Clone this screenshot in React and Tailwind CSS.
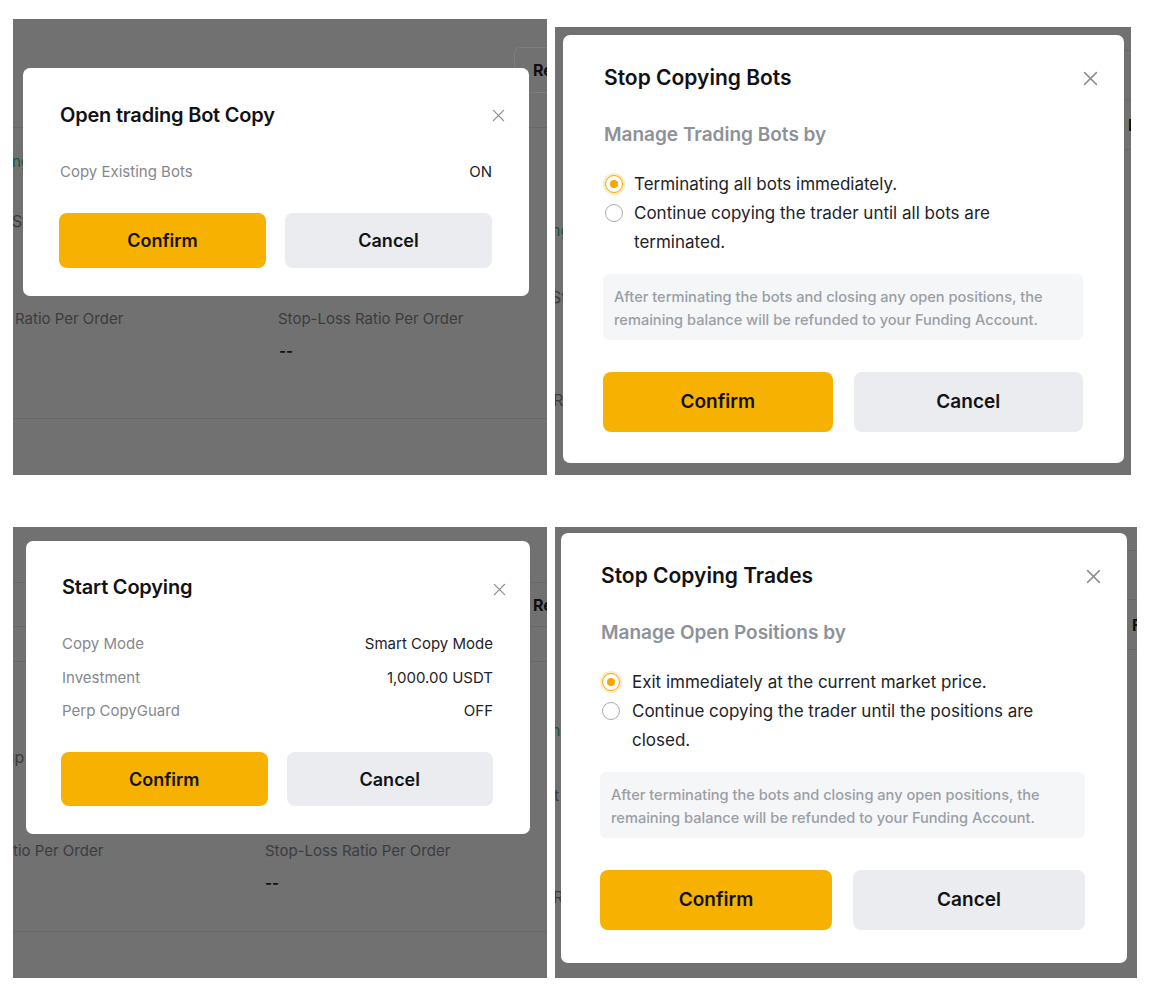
import React from "react";

function XIcon({ size = 13, className = "" }) {
  return (
    <svg width={size} height={size} viewBox="0 0 14 14" className={className} fill="none">
      <path d="M1.5 1.5L12.5 12.5M12.5 1.5L1.5 12.5" stroke="#8b8e94" strokeWidth="1.4" strokeLinecap="round" />
    </svg>
  );
}

function Radio({ checked }) {
  if (checked) {
    return (
      <span className="mt-[5px] ml-[2px] w-[18px] h-[18px] shrink-0 rounded-full border-[1.5px] border-[#F7A600] shadow-[0_0_0_2px_#FDEBC4] flex items-center justify-center">
        <span className="w-[8px] h-[8px] rounded-full bg-[#F7A600]" />
      </span>
    );
  }
  return <span className="mt-[5px] ml-[2px] w-[18px] h-[18px] shrink-0 rounded-full border-[1.5px] border-[#a8abb1] bg-white" />;
}

function Buttons({ h, gap, text }) {
  return (
    <div className={`flex ${gap}`}>
      <button className={`flex-1 ${h} rounded-[8px] bg-[#F7B100] ${text} font-semibold text-[#121214]`}>Confirm</button>
      <button className={`flex-1 ${h} rounded-[8px] bg-[#EAECEF] ${text} font-semibold text-[#121214]`}>Cancel</button>
    </div>
  );
}

function ReBox() {
  return (
    <div className="flex justify-end h-[46px]">
      <div className="w-[33px] border border-r-0 border-[#7d7d7d] rounded-l-[6px] flex items-center pl-[18px] font-bold text-[#0f0f0f] text-[16px] overflow-hidden whitespace-nowrap">
        Re
      </div>
    </div>
  );
}

function TopLeft() {
  return (
    <div className="relative w-[534px] h-[456px] bg-[#717171] overflow-hidden shrink-0">
      <div className="flex flex-col text-[15px] text-[#3b3c3f] whitespace-nowrap">
        <div className="h-[28px]" />
        <ReBox />
        <div className="h-[35px] border-b border-[#686868]" />
        <div className="h-[24px]" />
        <div className="h-[20px] leading-[20px] text-[#17563a] -ml-[1px]">ng</div>
        <div className="h-[39px]" />
        <div className="h-[20px] leading-[20px] -ml-[1px] text-[16px]">St</div>
        <div className="h-[78px]" />
        <div className="flex h-[20px] leading-[20px] text-[15px]">
          <div className="w-[265px] pl-[2px]">Ratio Per Order</div>
          <div>Stop-Loss Ratio Per Order</div>
        </div>
        <div className="h-[12px]" />
        <div className="h-[20px] leading-[20px] pl-[266px] font-bold text-[#151515]">--</div>
        <div className="h-[58px] border-b border-[#686868]" />
      </div>
      <div className="absolute left-[10px] top-[49px] w-[506px] h-[228px] bg-white rounded-[7px] pl-[36px] pr-[37px] pt-[33px] flex flex-col">
        <div className="flex items-center justify-between h-[28px]">
          <div className="text-[20px] font-semibold text-[#121214] pl-[1px] tracking-[-0.2px]">Open trading Bot Copy</div>
          <XIcon className="-mr-[13px]" />
        </div>
        <div className="mt-[33px] flex justify-between h-[20px] leading-[20px] text-[15px] pl-[1px]">
          <span className="text-[#85888e]">Copy Existing Bots</span>
          <span className="text-[#1e2329]">ON</span>
        </div>
        <div className="mt-[31px]">
          <Buttons h="h-[55px]" gap="gap-[19px]" text="text-[18px]" />
        </div>
      </div>
    </div>
  );
}

function BottomLeft() {
  const rows = [
    ["Copy Mode", "Smart Copy Mode"],
    ["Investment", "1,000.00 USDT"],
    ["Perp CopyGuard", "OFF"],
  ];
  return (
    <div className="relative w-[534px] h-[451px] bg-[#717171] overflow-hidden shrink-0">
      <div className="flex flex-col text-[15px] text-[#3b3c3f] whitespace-nowrap">
        <div className="h-[56px] border-b border-[#686868]" />
        <div className="flex justify-end h-[44px] border-b border-[#686868]">
          <div className="w-[17px] flex items-center pl-[3px] font-bold text-[#0f0f0f] text-[16px] overflow-hidden">Re</div>
        </div>
        <div className="h-[35px] border-b border-[#686868]" />
        <div className="h-[85px]" />
        <div className="h-[20px] leading-[20px] -ml-[8px] text-[16px]">up</div>
        <div className="h-[74px]" />
        <div className="flex h-[20px] leading-[20px] text-[15px]">
          <div className="w-[252px]">tio Per Order</div>
          <div>Stop-Loss Ratio Per Order</div>
        </div>
        <div className="h-[12px]" />
        <div className="h-[20px] leading-[20px] pl-[252px] font-bold text-[#151515]">--</div>
        <div className="h-[39px] border-b border-[#686868]" />
      </div>
      <div className="absolute left-[13px] top-[14px] w-[504px] h-[293px] bg-white rounded-[7px] pl-[35px] pr-[37px] pt-[32px] flex flex-col">
        <div className="flex items-center justify-between h-[28px]">
          <div className="text-[20px] font-semibold text-[#121214] pl-[1px] tracking-[-0.2px]">Start Copying</div>
          <XIcon className="-mr-[13px] mt-[4px]" />
        </div>
        <div className="mt-[33px] flex flex-col gap-[13.5px] text-[15px] pl-[1px]">
          {rows.map(([k, v]) => (
            <div key={k} className="flex justify-between h-[20px] leading-[20px]">
              <span className="text-[#85888e]">{k}</span>
              <span className="text-[#1e2329]">{v}</span>
            </div>
          ))}
        </div>
        <div className="mt-[31px]">
          <Buttons h="h-[54px]" gap="gap-[19px]" text="text-[18px]" />
        </div>
      </div>
    </div>
  );
}

function RightStrip({ width, mark }) {
  return (
    <div className={`flex flex-col ${width} shrink-0 overflow-hidden`}>
      <div className="h-[24px] border-b border-[#686868]" />
      <div className="h-[49px] border-b border-[#686868]" />
      <div className="h-[15px]" />
      <div className={`h-[20px] leading-[20px] font-bold text-[#0f0f0f] text-[16px] ${mark}`}>F</div>
      <div className="h-[15px] border-b border-[#686868]" />
    </div>
  );
}

function StopModal({ title, subtitle, opt1, opt2a, opt2b, dims }) {
  return (
    <div className={`absolute ${dims.pos} ${dims.size} bg-white rounded-[7px] ${dims.pad} pt-[29px] flex flex-col`}>
      <div className="flex items-center justify-between h-[28px]">
        <div className="text-[21px] font-semibold text-[#121214] pl-[1px]">{title}</div>
        <XIcon size={15} className={dims.xm} />
      </div>
      <div className="mt-[30px] h-[26px] leading-[26px] text-[19px] font-semibold text-[#8d9198] pl-[1px]">{subtitle}</div>
      <div className="mt-[22px] flex flex-col text-[17px] text-[#1e2329] leading-[29px]">
        <div className={`flex items-start ${dims.rg}`}>
          <Radio checked />
          <span>{opt1}</span>
        </div>
        <div className={`flex items-start ${dims.rg}`}>
          <Radio />
          <span>
            {opt2a}
            <br />
            {opt2b}
          </span>
        </div>
      </div>
      <div className="mt-[17px] h-[66px] rounded-[6px] bg-[#F5F6F8] pl-[11px] pt-[12px] text-[14.6px] leading-[23px] font-medium text-[#9a9ea5] whitespace-nowrap">
        After terminating the bots and closing any open positions, the
        <br />
        remaining balance will be refunded to your Funding Account.
      </div>
      <div className="mt-[32px]">
        <Buttons h="h-[60px]" gap="gap-[21px]" text="text-[19px]" />
      </div>
    </div>
  );
}

function TopRight() {
  return (
    <div className="relative w-[576px] h-[448px] bg-[#717171] overflow-hidden shrink-0">
      <div className="flex justify-between text-[16px] text-[#3b3c3f] whitespace-nowrap">
        <div className="flex flex-col w-[8px]">
          <div className="h-[193px]" />
          <div className="h-[20px] leading-[20px] text-[#17563a] -ml-[4px]">ng</div>
          <div className="h-[47px]" />
          <div className="h-[20px] leading-[20px] -ml-[4px]">St</div>
          <div className="h-[83px]" />
          <div className="h-[20px] leading-[20px] -ml-[2px]">R</div>
        </div>
        <RightStrip width="w-[7px]" mark="pl-[4px]" />
      </div>
      <StopModal
        title="Stop Copying Bots"
        subtitle="Manage Trading Bots by"
        opt1="Terminating all bots immediately."
        opt2a="Continue copying the trader until all bots are"
        opt2b="terminated."
        dims={{ pos: "left-[8px] top-[8px]", size: "w-[561px] h-[428px]", pad: "pl-[40px] pr-[41px]", xm: "-mr-[15px]", rg: "gap-[11px]" }}
      />
    </div>
  );
}

function BottomRight() {
  return (
    <div className="relative w-[582px] h-[451px] bg-[#717171] overflow-hidden shrink-0">
      <div className="flex justify-between text-[16px] text-[#3b3c3f] whitespace-nowrap">
        <div className="flex flex-col w-[6px]">
          <div className="h-[193px]" />
          <div className="h-[20px] leading-[20px] text-[#17563a] -ml-[4px]">ng</div>
          <div className="h-[45px]" />
          <div className="h-[20px] leading-[20px] -ml-[1px]">t</div>
          <div className="h-[82px]" />
          <div className="h-[20px] leading-[20px] -ml-[2px]">R</div>
        </div>
        <RightStrip width="w-[10px]" mark="pl-[5px]" />
      </div>
      <StopModal
        title="Stop Copying Trades"
        subtitle="Manage Open Positions by"
        opt1="Exit immediately at the current market price."
        opt2a="Continue copying the trader until the positions are"
        opt2b="closed."
        dims={{ pos: "left-[6px] top-[6px]", size: "w-[566px] h-[430px]", pad: "pl-[39px] pr-[42px]", xm: "-mr-[16px]", rg: "gap-[12px]" }}
      />
    </div>
  );
}

export default function App() {
  return (
    <div className="w-[1150px] h-[990px] bg-white flex flex-col font-['Inter',sans-serif]">
      <div className="flex items-start gap-[8px] pl-[13px] pt-[19px]">
        <TopLeft />
        <div className="mt-[8px]">
          <TopRight />
        </div>
      </div>
      <div className="flex items-start gap-[8px] pl-[13px] mt-[52px]">
        <BottomLeft />
        <BottomRight />
      </div>
    </div>
  );
}
